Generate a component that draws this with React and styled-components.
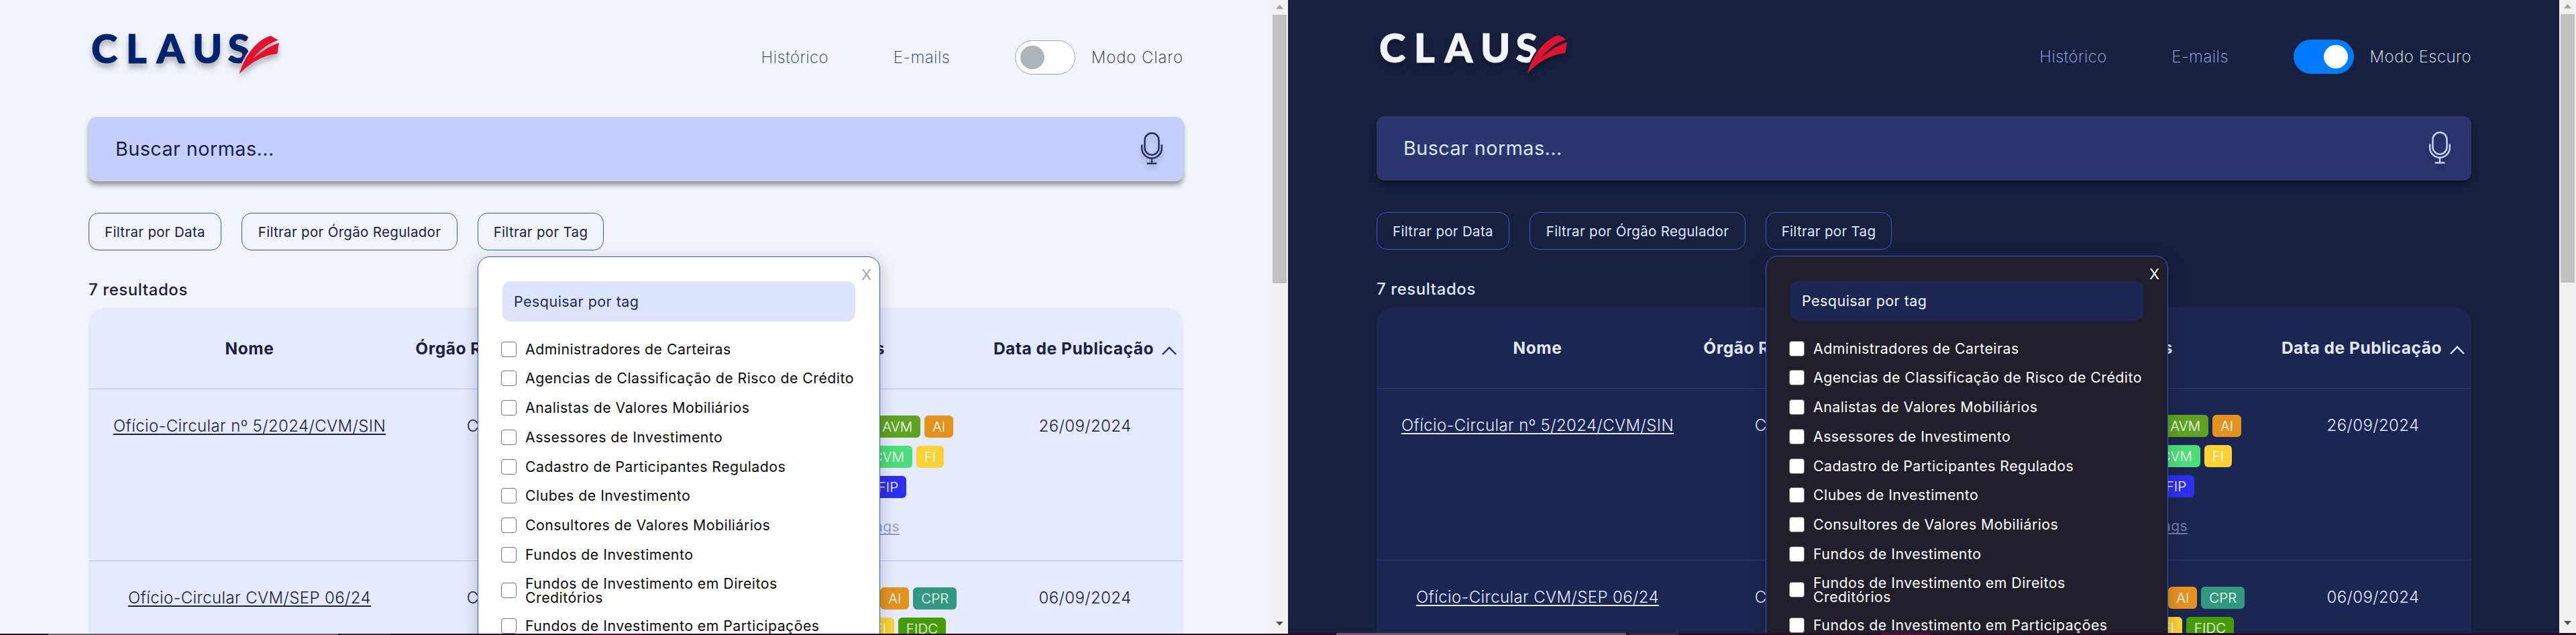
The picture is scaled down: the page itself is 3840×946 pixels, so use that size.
import React from "react";
import styled, { createGlobalStyle, ThemeProvider, css } from "styled-components";

const light = {
  name: "light",
  nudge: 1,
  bg: "#f1f4fd",
  text: "#1a2040",
  nav: "#26386e",
  modeText: "#1f1f45",
  logo: "#00226b",
  search: "#c5cffe",
  placeholder: "#1d2145",
  mic: "#263056",
  outline: "#3459d3",
  table: "#e5eaff",
  line: "#b2c2fa",
  tableText: "#1a2040",
  chevron: "#2a366e",
  more: "#8f9fd2",
  popup: "#ffffff",
  popupText: "#0c0c10",
  popupField: "#dce4ff",
  popupPlaceholder: "#232a55",
  close: "#a5a5a5",
  toggle: "#ffffff",
  toggleBorder: "#86a9d2",
  knob: "#adb5bc",
  shadow: "rgba(0, 0, 0, 0.38)",
};

const dark = {
  name: "dark",
  nudge: 0,
  bg: "#18203f",
  text: "#dfe6ff",
  nav: "#9fb4f5",
  modeText: "#eef1fc",
  logo: "#f1f4fd",
  search: "#2a366d",
  placeholder: "#dce4ff",
  mic: "#c9d3fb",
  outline: "#3459d3",
  table: "#1c2652",
  line: "#2b3a7c",
  tableText: "#e3e9ff",
  chevron: "#dce4ff",
  more: "#6f7ba6",
  popup: "#211f2c",
  popupText: "#ffffff",
  popupField: "#1c2652",
  popupPlaceholder: "#f4f6ff",
  close: "#ffffff",
  toggle: "#007bff",
  toggleBorder: "#0d77ee",
  knob: "#ffffff",
  shadow: "rgba(0, 0, 0, 0.38)",
};

const tagColors = {
  AVM: "#5ea322",
  AI: "#e39220",
  CVM: "#4ddd7a",
  FI: "#f8d237",
  FIP: "#2e2fec",
  CPR: "#329980",
  FIDC: "#459c06",
};

const documents = [
  {
    name: "Ofício-Circular nº 5/2024/CVM/SIN",
    agency: "CVM",
    tags: [["AVM", "AI"], ["CVM", "FI"], ["FIP"]],
    more: true,
    date: "26/09/2024",
  },
  {
    name: "Ofício-Circular CVM/SEP 06/24",
    agency: "CVM",
    tags: [["AI", "CPR"], ["FI", "FIDC"]],
    date: "06/09/2024",
  },
];

const lineWidths = { "AVM AI": 264, "CVM FI": 236, FIP: 124, "AI CPR": 274, "FI FIDC": 242 };

const tagOptions = [
  "Administradores de Carteiras",
  "Agencias de Classificação de Risco de Crédito",
  "Analistas de Valores Mobiliários",
  "Assessores de Investimento",
  "Cadastro de Participantes Regulados",
  "Clubes de Investimento",
  "Consultores de Valores Mobiliários",
  "Fundos de Investimento",
  "Fundos de Investimento em Direitos\nCreditórios",
  "Fundos de Investimento em Participações",
];

const GlobalStyle = createGlobalStyle`
  * { box-sizing: border-box; }
  body {
    margin: 0;
    font-family: Inter, "Open Sans", sans-serif;
    overflow: hidden;
  }
`;

const Screens = styled.div`
  display: grid;
  grid-template-columns: 1920px 1920px;
  width: 3840px;
  height: 946px;
  overflow: hidden;
`;

const Screen = styled.section`
  display: grid;
  grid-template-rows: minmax(0, 1fr) ${(p) => 3 - p.theme.nudge}px;
  height: 946px;
  background: ${(p) => p.theme.bg};
`;

const Viewport = styled.div`
  display: grid;
  grid-template-columns: 1895px 25px;
  overflow: hidden;
`;

const Page = styled.main`
  padding: ${(p) => p.theme.nudge}px 131px 0 132px;
  color: ${(p) => p.theme.text};
  overflow: hidden;
`;

const Header = styled.header`
  display: flex;
  align-items: center;
  justify-content: space-between;
  height: 173px;
  padding-bottom: 5px;
`;

const LogoSvg = styled.svg`
  display: block;
  overflow: visible;
  filter: drop-shadow(0 6px 4px rgba(0, 0, 0, 0.3));
`;

const LogoLetters = styled.text`
  font-family: Lato, sans-serif;
  font-weight: 900;
  font-size: 59.5px;
  fill: ${(p) => p.theme.logo};
  stroke: ${(p) => p.theme.logo};
  stroke-width: 1;
`;

const Nav = styled.nav`
  display: flex;
  align-items: center;
  font-size: 24px;
  font-weight: 200;
`;

const NavLink = styled.a`
  margin-right: 96.5px;
  letter-spacing: 0.45px;
  color: ${(p) => p.theme.nav};
`;

const Toggle = styled.span`
  display: flex;
  align-items: center;
  justify-content: ${(p) => (p.theme.name === "dark" ? "flex-end" : "flex-start")};
  width: 90px;
  height: 51px;
  padding: 0 8px 0 7px;
  border: 1.5px solid ${(p) => p.theme.toggleBorder};
  border-radius: 26px;
  background: ${(p) => p.theme.toggle};
`;

const Knob = styled.span`
  width: 36px;
  height: 35px;
  border-radius: 50%;
  background: ${(p) => p.theme.knob};
`;

const ModeLabel = styled.span`
  margin-left: 24px;
  letter-spacing: ${(p) => (p.theme.name === "dark" ? 0.5 : 0.9)}px;
  color: ${(p) => p.theme.modeText};
`;

const SearchBar = styled.div`
  display: flex;
  align-items: center;
  justify-content: space-between;
  height: 96px;
  padding: 0 30px 2px 40px;
  border-radius: 12px;
  background: ${(p) => p.theme.search};
  box-shadow: 0 6px 7px ${(p) => p.theme.shadow};
  font-size: 28.8px;
  font-weight: 390;
  letter-spacing: 0.42px;
  color: ${(p) => p.theme.placeholder};
`;

const MicSvg = styled.svg`
  display: block;
  fill: none;
  stroke: ${(p) => p.theme.mic};
  stroke-width: 2.5;
  overflow: visible;
  filter: drop-shadow(0 6px 4px rgba(0, 0, 0, 0.22));
`;

const Filters = styled.div`
  display: flex;
  gap: 30px;
  margin-top: 47px;
`;

const FilterSlot = styled.div`
  position: relative;
  width: ${(p) => p.$width}px;
`;

const FilterButton = styled.div`
  display: flex;
  align-items: center;
  justify-content: center;
  height: 56px;
  border: 1.5px solid ${(p) => p.theme.outline};
  border-radius: 15px;
  font-size: 20.5px;
  font-weight: 390;
  letter-spacing: 0.32px;
  white-space: nowrap;
`;

const Popup = styled.div`
  position: absolute;
  z-index: 2;
  top: 65px;
  left: 0;
  width: 600px;
  height: 700px;
  padding: 36px 36px 0;
  border: 1.5px solid ${(p) => p.theme.outline};
  border-radius: 18px;
  background: ${(p) => p.theme.popup};
  box-shadow: 0 6px 24px rgba(0, 0, 0, 0.22);
  color: ${(p) => p.theme.popupText};
`;

const Close = styled.span`
  position: absolute;
  top: 14px;
  right: 12px;
  font-size: 22px;
  line-height: 24px;
  color: ${(p) => p.theme.close};
`;

const PopupSearch = styled.div`
  display: flex;
  align-items: center;
  width: 526px;
  height: 60px;
  padding-left: 17px;
  border-radius: 12px;
  background: ${(p) => p.theme.popupField};
  color: ${(p) => p.theme.popupPlaceholder};
  font-size: 21.5px;
  font-weight: 380;
  letter-spacing: 0.45px;
`;

const Options = styled.ul`
  display: flex;
  flex-direction: column;
  gap: 21.2px;
  margin: 30px 0 0 -2px;
  padding: 0;
  list-style: none;
`;

const Option = styled.li`
  display: flex;
  align-items: center;
  gap: 13px;
  min-height: 22.5px;
  font-size: 21.3px;
  font-weight: 390;
  line-height: 21px;
  letter-spacing: 0.47px;
`;

const Box = styled.span`
  flex: none;
  width: 23px;
  height: 23px;
  margin: -0.25px 0;
  border: 1.5px solid #767676;
  border-radius: 4px;
  background: #fff;
`;

const OptionText = styled.span`
  white-space: pre;
`;

const Results = styled.p`
  margin: 41px 0 9px;
  font-size: 24px;
  font-weight: 450;
  line-height: 36px;
  letter-spacing: 0.58px;
`;

const Table = styled.div`
  height: 600px;
  border-radius: 24px 24px 0 0;
  background: ${(p) => p.theme.table};
  color: ${(p) => p.theme.tableText};
`;

const columns = css`
  display: grid;
  grid-template-columns: 480px 224px 271px 364px 293px;
  justify-items: center;
`;

const TableHead = styled.div`
  ${columns}
  align-items: center;
  height: 120px;
  font-size: 24.5px;
  font-weight: 700;
  letter-spacing: 0.54px;
  white-space: nowrap;
`;

const SortHead = styled.span`
  display: flex;
  align-items: center;
  gap: 12px;
`;

const ChevronSvg = styled.svg`
  margin-top: 7px;
  fill: none;
  stroke: ${(p) => p.theme.chevron};
  stroke-width: 2.4;
`;

const Row = styled.div`
  ${columns}
  align-items: start;
  height: 256px;
  padding-top: 40px;
  border-top: 1px solid ${(p) => p.theme.line};
  font-size: 24px;
  font-weight: 300;
  line-height: 29px;
  letter-spacing: 0.38px;
  white-space: nowrap;
`;

const DocLink = styled.a`
  text-decoration: underline;
  text-decoration-thickness: 1.5px;
  text-underline-offset: 3px;
  text-decoration-skip-ink: none;
`;

const TagCell = styled.div`
  display: flex;
  flex-direction: column;
  align-items: center;
  gap: 12px;
  margin-top: -1px;
`;

const TagLine = styled.div`
  display: flex;
  justify-content: flex-end;
  gap: 6px;
  width: ${(p) => p.$width}px;
`;

const Tag = styled.span`
  height: 33px;
  padding: 0 11.7px 0 12px;
  border-radius: 6px;
  background: ${(p) => p.$color};
  color: #fff;
  font-size: 20.5px;
  font-weight: 350;
  line-height: 33px;
  letter-spacing: 0.1px;
`;

const MoreTags = styled.a`
  margin-top: 16px;
  padding-left: 5px;
  font-size: 21px;
  font-weight: 380;
  letter-spacing: 0.4px;
  text-decoration: underline;
  text-underline-offset: 3px;
  text-decoration-skip-ink: none;
  color: ${(p) => p.theme.more};
`;

const Scrollbar = styled.div`
  display: flex;
  flex-direction: column;
  align-items: center;
  padding: ${(p) => p.theme.nudge + 6}px 0 12px;
  background: #f1f1f1;
`;

const Thumb = styled.div`
  width: 21px;
  height: 400px;
  margin: 8px 0 auto;
  background: #c1c1c1;
`;

const Arrow = styled.svg`
  display: block;
  fill: ${(p) => p.$fill};
`;

const Taskbar = styled.div`
  display: flex;
  background: #2b0c26;
`;

const TaskbarItem = styled.span`
  width: ${(p) => p.$width}px;
  margin-left: ${(p) => p.$gap}px;
  background: ${(p) => p.$color};
`;

const FEATHER =
  "M357 110 C363 88 380 60 403.7 53.3 L414.7 59.7 C399 65 388 74 376.5 88 C389 77 401 69 416 63.7 L413.3 80 C392 82 372 94 357 110Z";

function Logo({ id }) {
  return (
    <LogoSvg width="290" height="80" viewBox="132 45 290 80" role="img" aria-label="CLAUS">
      <mask id={id} maskUnits="userSpaceOnUse" x="130" y="40" width="300" height="90">
        <rect x="130" y="40" width="300" height="90" fill="#fff" />
        <path d={FEATHER} fill="#000" stroke="#000" strokeWidth="5" />
      </mask>
      <LogoLetters y="93.5" x="136 187.8 233.5 287 339.5" mask={`url(#${id})`}>
        CLAUS
      </LogoLetters>
      <path d={FEATHER} fill="#dd1432" />
    </LogoSvg>
  );
}

function Mic() {
  return (
    <MicSvg width="34" height="50" viewBox="0 0 34 50">
      <rect x="6.5" y="2.2" width="21" height="32.5" rx="10.5" />
      <path d="M2.2 19.5 V25 A14.8 14.8 0 0 0 31.8 25 V19.5 M17 39.5 V47.5 M9.7 47.5 H24.3" />
    </MicSvg>
  );
}

function TagPopup() {
  return (
    <Popup>
      <Close>X</Close>
      <PopupSearch>Pesquisar por tag</PopupSearch>
      <Options>
        {tagOptions.map((label) => (
          <Option key={label}>
            <Box />
            <OptionText>{label}</OptionText>
          </Option>
        ))}
      </Options>
    </Popup>
  );
}

function Home({ theme, modeLabel }) {
  return (
    <ThemeProvider theme={theme}>
      <Screen>
        <Viewport>
          <Page>
            <Header>
              <Logo id={`cut-${theme.name}`} />
              <Nav>
                <NavLink>Histórico</NavLink>
                <NavLink>E-mails</NavLink>
                <Toggle>
                  <Knob />
                </Toggle>
                <ModeLabel>{modeLabel}</ModeLabel>
              </Nav>
            </Header>
            <SearchBar>
              Buscar normas...
              <Mic />
            </SearchBar>
            <Filters>
              <FilterSlot $width={198}>
                <FilterButton>Filtrar por Data</FilterButton>
              </FilterSlot>
              <FilterSlot $width={322}>
                <FilterButton>Filtrar por Órgão Regulador</FilterButton>
              </FilterSlot>
              <FilterSlot $width={188}>
                <FilterButton>Filtrar por Tag</FilterButton>
                <TagPopup />
              </FilterSlot>
            </Filters>
            <Results>7 resultados</Results>
            <Table>
              <TableHead>
                <span>Nome</span>
                <span>Órgão Regulador</span>
                <span />
                <span>Tags</span>
                <SortHead>
                  Data de Publicação
                  <ChevronSvg width="22" height="13" viewBox="0 0 22 13">
                    <path d="M1 12 L11 1.8 L21 12" />
                  </ChevronSvg>
                </SortHead>
              </TableHead>
              {documents.map((doc) => (
                <Row key={doc.name}>
                  <DocLink>{doc.name}</DocLink>
                  <span>{doc.agency}</span>
                  <span />
                  <TagCell>
                    {doc.tags.map((line) => (
                      <TagLine key={line.join()} $width={lineWidths[line.join(" ")]}>
                        {line.map((tag) => (
                          <Tag key={tag} $color={tagColors[tag]}>
                            {tag}
                          </Tag>
                        ))}
                      </TagLine>
                    ))}
                    {doc.more && <MoreTags>Mais tags</MoreTags>}
                  </TagCell>
                  <span>{doc.date}</span>
                </Row>
              ))}
            </Table>
          </Page>
          <Scrollbar>
            <Arrow $fill="#a3a3a3" width="11" height="7" viewBox="0 0 11 7">
              <path d="M5.5 0 L11 6.5 H0Z" />
            </Arrow>
            <Thumb />
            <Arrow $fill="#505050" width="11" height="6" viewBox="0 0 11 6">
              <path d="M0 0 H11 L5.5 6Z" />
            </Arrow>
          </Scrollbar>
        </Viewport>
        <Taskbar>
          <TaskbarItem $gap={72} $width={432} $color="#75586b" />
          <TaskbarItem $gap={5} $width={73} $color="#43243d" />
          <TaskbarItem $gap={302} $width={73} $color="#5a0a3a" />
        </Taskbar>
      </Screen>
    </ThemeProvider>
  );
}

export default function App() {
  return (
    <>
      <GlobalStyle />
      <Screens>
        <Home theme={light} modeLabel="Modo Claro" />
        <Home theme={dark} modeLabel="Modo Escuro" />
      </Screens>
    </>
  );
}
